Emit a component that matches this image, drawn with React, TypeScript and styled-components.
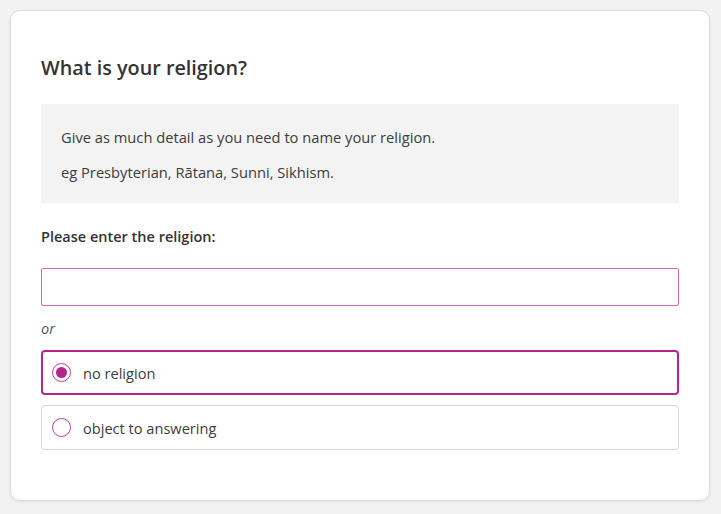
import React, { useState } from "react";
import styled, { createGlobalStyle, css } from "styled-components";

const GlobalStyle = createGlobalStyle`
  html, body {
    margin: 0;
    padding: 0;
    background: #f2f2f2;
  }
  body {
    font-family: "Open Sans", Lato, sans-serif;
    color: #333333;
  }
`;

const Page = styled.main`
  padding: 10px 11px 14px 10px;
`;

const Card = styled.section`
  background: #ffffff;
  border: 1px solid #dcdcdc;
  border-radius: 10px;
  box-shadow: 0 1px 3px rgba(0, 0, 0, 0.08);
  padding: 43px 30px 50px 30px;
`;

const Title = styled.h1`
  margin: 0 0 22px;
  font-size: 19.8px;
  line-height: 28px;
  font-weight: 550;
  color: #333333;
`;

const Hint = styled.div`
  background: #f3f3f3;
  padding: 21px 20px 19px;
  p {
    margin: 0;
    font-size: 14.7px;
    line-height: 24px;
    color: #3d3d3d;
  }
  p + p {
    margin-top: 11px;
  }
`;

const Label = styled.label`
  display: block;
  margin-top: 23px;
  font-size: 14.5px;
  line-height: 22px;
  font-weight: 600;
  color: #333333;
`;

const TextInput = styled.input`
  display: block;
  box-sizing: border-box;
  width: 100%;
  height: 38px;
  margin-top: 20px;
  border: 1px solid #d466b8;
  border-radius: 2px;
  padding: 0 10px;
  font: inherit;
  font-size: 15px;
  outline: none;
`;

const Or = styled.div`
  margin: 12px 0 10px;
  font-size: 14.5px;
  line-height: 22px;
  font-style: italic;
  color: #555555;
`;

const Options = styled.div`
  display: flex;
  flex-direction: column;
  gap: 10px;
`;

const Option = styled.label<{ $selected: boolean }>`
  display: flex;
  align-items: center;
  gap: 12px;
  box-sizing: border-box;
  height: 45px;
  padding: 0 10px;
  border-radius: 4px;
  cursor: pointer;
  font-size: 14.6px;
  color: #3d3d3d;
  ${(p) =>
    p.$selected
      ? css`
          border: 2px solid #b3268e;
          padding-left: 9px;
        `
      : css`
          border: 1px solid #d4d4d4;
        `}
`;

const Dot = styled.span<{ $selected: boolean }>`
  flex: none;
  box-sizing: border-box;
  width: 19px;
  height: 19px;
  border-radius: 50%;
  border: 1.5px solid #c2409f;
  display: flex;
  align-items: center;
  justify-content: center;
  &::after {
    content: "";
    width: 11px;
    height: 11px;
    border-radius: 50%;
    background: #b3268e;
    display: ${(p) => (p.$selected ? "block" : "none")};
  }
`;

const choices = ["no religion", "object to answering"];

export default function App() {
  const [picked, setPicked] = useState(0);
  return (
    <>
      <GlobalStyle />
      <Page>
        <Card>
          <Title>What is your religion?</Title>
          <Hint>
            <p>Give as much detail as you need to name your religion.</p>
            <p>eg Presbyterian, Rātana, Sunni, Sikhism.</p>
          </Hint>
          <Label htmlFor="religion">Please enter the religion:</Label>
          <TextInput id="religion" type="text" />
          <Or>or</Or>
          <Options>
            {choices.map((c, i) => (
              <Option key={c} $selected={picked === i} onClick={() => setPicked(i)}>
                <Dot $selected={picked === i} />
                {c}
              </Option>
            ))}
          </Options>
        </Card>
      </Page>
    </>
  );
}
